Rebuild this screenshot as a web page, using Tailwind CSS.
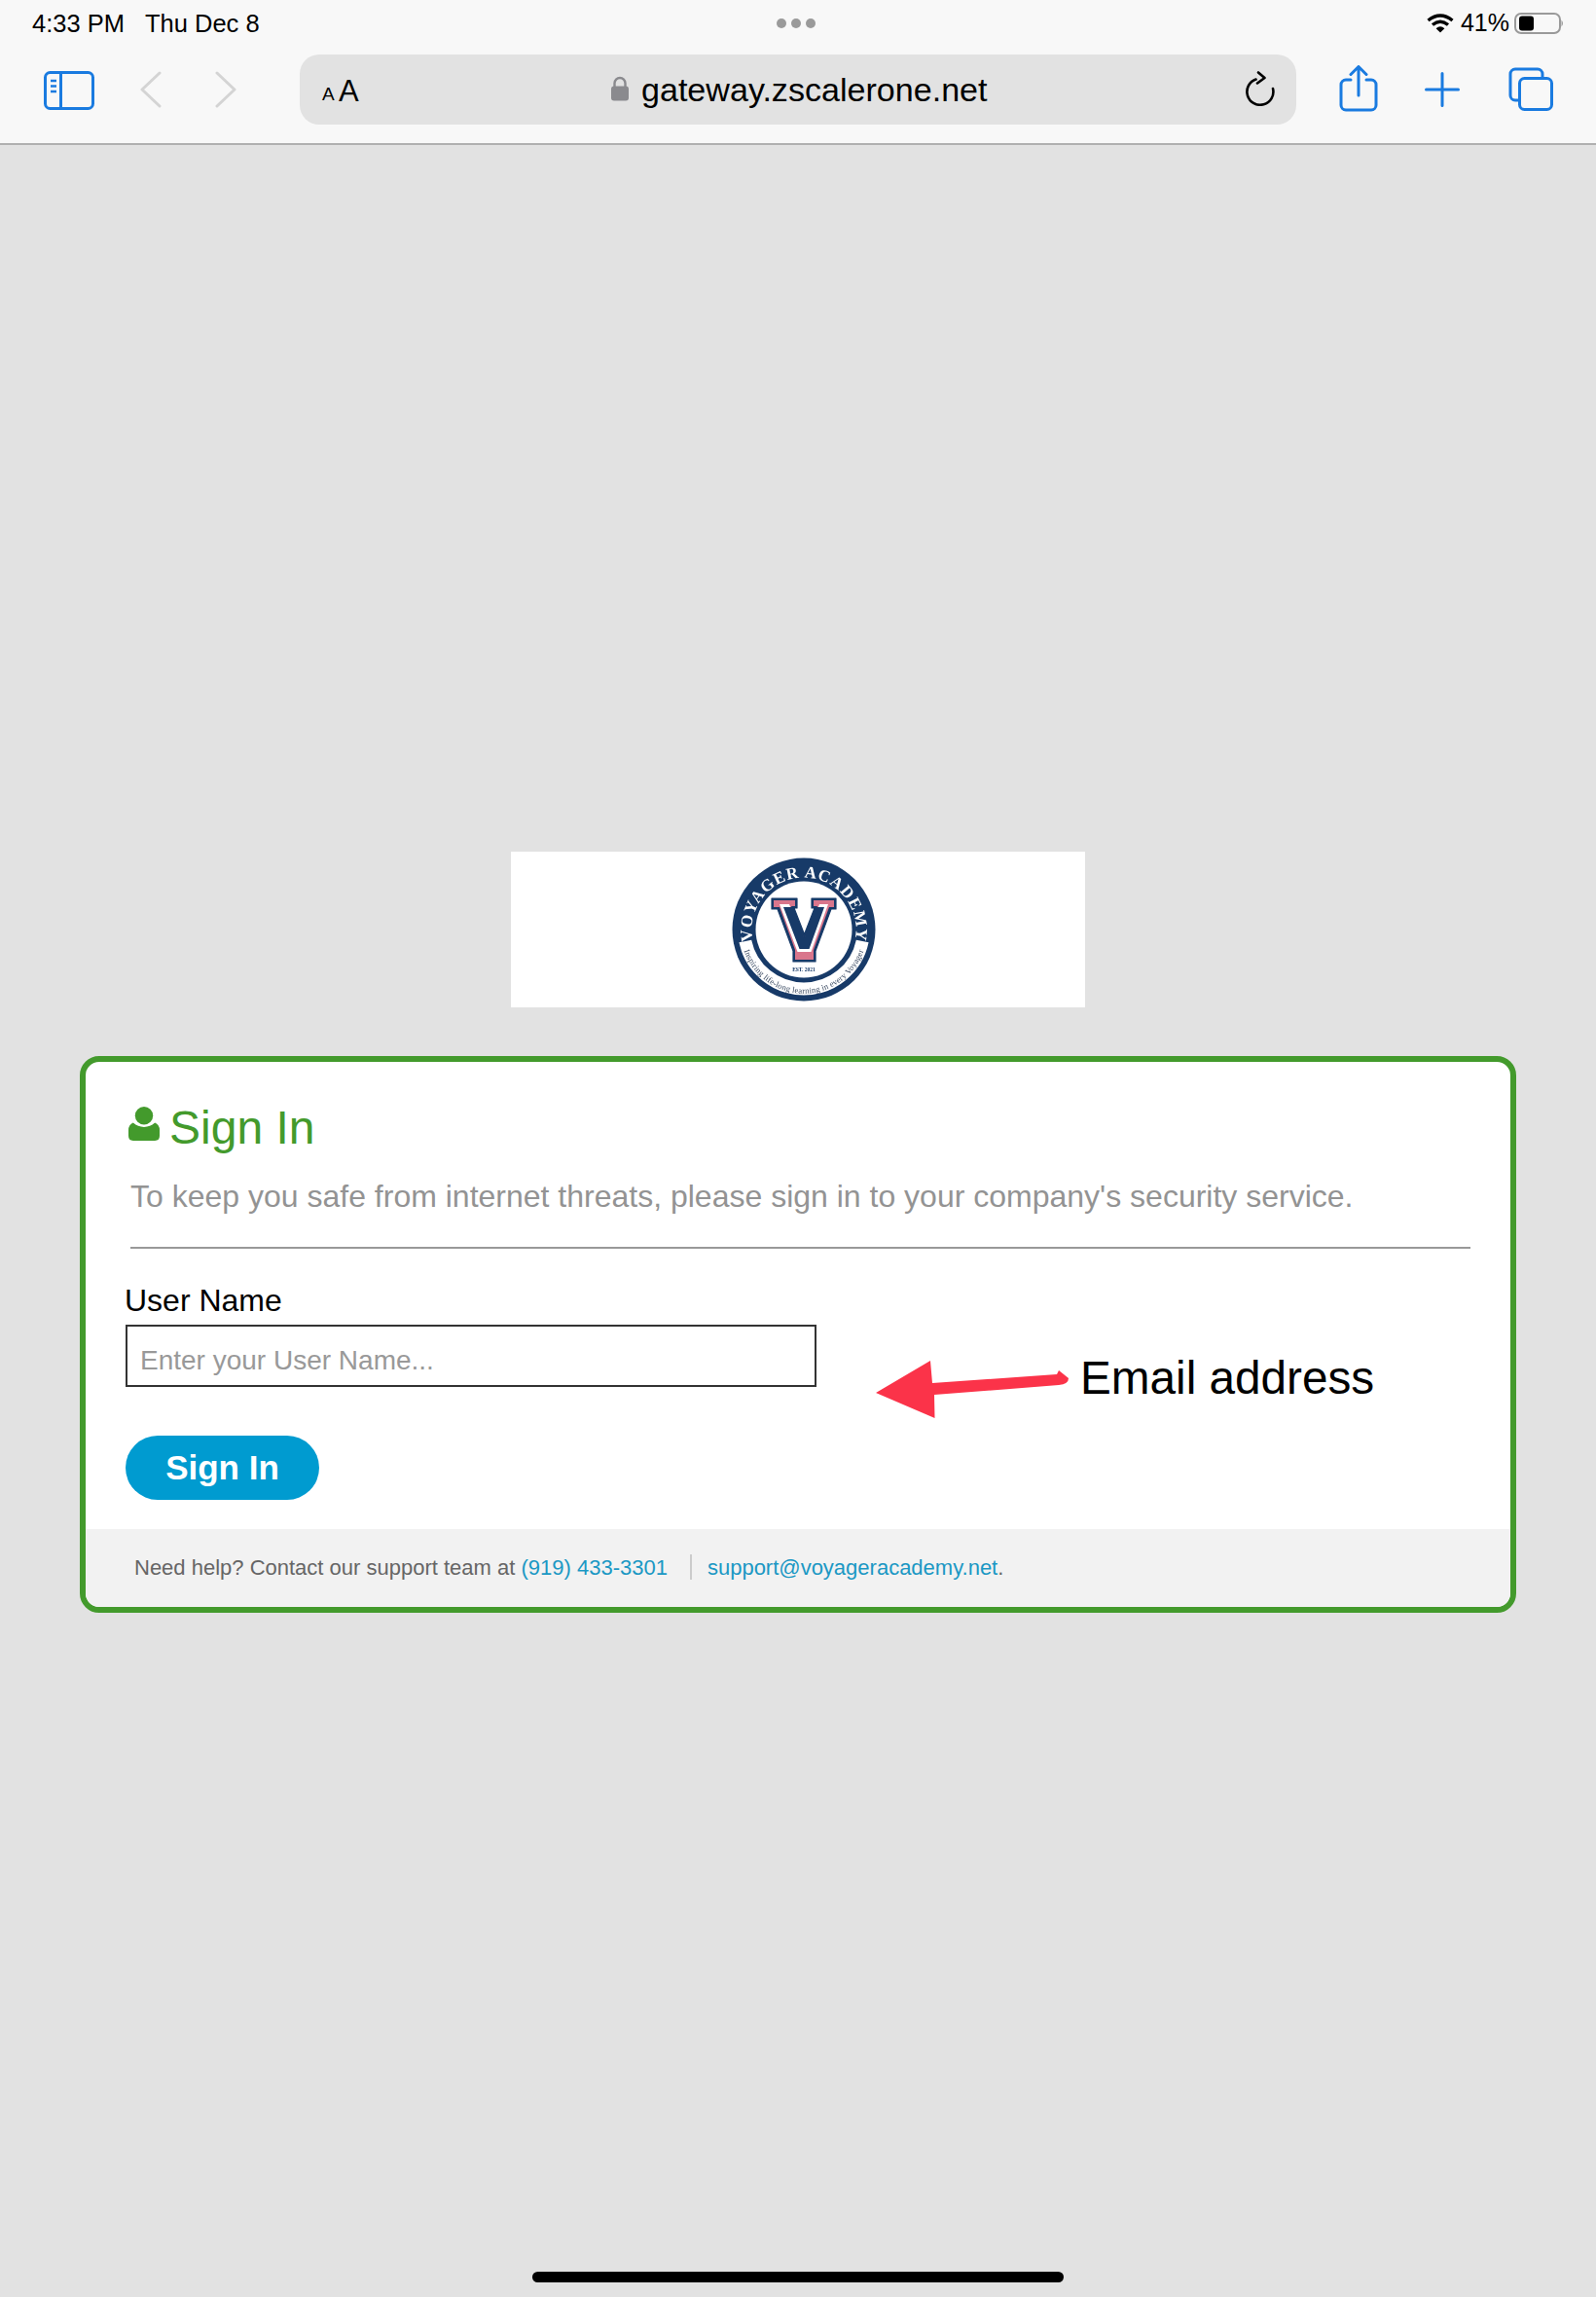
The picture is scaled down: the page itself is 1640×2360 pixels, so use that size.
<!doctype html>
<html>
<head>
<meta charset="utf-8">
<script src="https://cdn.jsdelivr.net/npm/@tailwindcss/browser@4"></script>
</head>
<body class="m-0 bg-[#e2e2e2] font-['Liberation_Sans',Arial,sans-serif]">
<div class="relative w-[1640px] h-[2360px] overflow-hidden flex flex-col">
  <header class="h-[149px] shrink-0 bg-[#f8f8f8] border-b-2 border-[#b0b0b0] flex flex-col">
    <div class="relative h-[48px] flex items-center justify-between pl-[33px] pr-[32px] text-[25.500px] text-black">
      <div class="flex gap-[21px]"><span>4:33 PM</span><span>Thu Dec 8</span></div>
      <div class="absolute left-[798px] top-[19px] flex gap-[5px]">
        <span class="w-[10px] h-[10px] rounded-full bg-[#9a9a9a]"></span>
        <span class="w-[10px] h-[10px] rounded-full bg-[#9a9a9a]"></span>
        <span class="w-[10px] h-[10px] rounded-full bg-[#9a9a9a]"></span>
      </div>
      <div class="flex items-center">
        <svg class="w-[28px] h-[20px] mr-[7px]" viewBox="0 0 28 20" fill="none" stroke="#000" stroke-width="3.4">
          <path d="M1.5 7 Q14 -3 26.5 7"/><path d="M6 11.5 Q14 5 22 11.5"/><path d="M14 19.5 L9.6 15.2 Q14 11.5 18.4 15.2 Z" fill="#000" stroke="none"/>
        </svg>
        <span class="text-[25px]">41%</span>
        <svg class="w-[52px] h-[22px] ml-[5px]" viewBox="0 0 52 22" fill="none">
          <rect x="1" y="1" width="46" height="20" rx="6" stroke="#9a9a9a" stroke-width="2"/>
          <rect x="5" y="3.5" width="15" height="15" rx="3" fill="#000"/>
          <path d="M48.500 7.500 Q51.500 11 48.500 14.500 Z" fill="#9a9a9a"/>
        </svg>
      </div>
    </div>
    <div class="h-[72px] mt-[8px] flex items-center relative">
      <svg class="absolute left-[45px] top-[17px] w-[52px] h-[40px]" viewBox="0 0 52 40" fill="none" stroke="#1a7be0" stroke-width="3">
        <rect x="1.5" y="1.5" width="49" height="37" rx="5"/><path d="M17.5 1.5 V38.5"/>
        <path d="M7 10 H13 M7 15.5 H13 M7 21 H13" stroke-width="2.4"/>
      </svg>
      <svg class="absolute left-[143px] top-[17px] w-[24px] h-[38px]" viewBox="0 0 24 38" fill="none" stroke="#d4d4d4" stroke-width="3" stroke-linecap="round" stroke-linejoin="round"><path d="M21 2 L3 19 L21 36"/></svg>
      <svg class="absolute left-[220px] top-[17px] w-[24px] h-[38px]" viewBox="0 0 24 38" fill="none" stroke="#d4d4d4" stroke-width="3" stroke-linecap="round" stroke-linejoin="round"><path d="M3 2 L21 19 L3 36"/></svg>

      <div class="absolute left-[308px] top-0 w-[1024px] h-[72px] rounded-[20px] bg-[#e2e2e2]">
        <span class="absolute left-[23px] top-[31px] text-[19px] leading-[20px] text-black">A</span>
        <span class="absolute left-[40px] top-[22px] text-[31px] leading-[32px] text-black">A</span>
        <svg class="absolute left-[319px] top-[22px] w-[20px] h-[26px]" viewBox="0 0 20 26" fill="none">
          <path d="M4.5 11 V7.5 A5.5 5.5 0 0 1 15.5 7.5 V11" stroke="#8a8a8e" stroke-width="2.4"/>
          <rect x="1" y="10.5" width="18" height="15" rx="3" fill="#8a8a8e"/>
        </svg>
        <span class="absolute left-[351px] top-[16px] text-[34.100px] leading-[40px] text-black">gateway.zscalerone.net</span>
        <svg class="absolute left-[971px] top-[17px] w-[32px] h-[36px]" viewBox="0 0 32 36" fill="none" stroke="#000" stroke-width="2.6" stroke-linecap="round" stroke-linejoin="round">
          <path d="M11.5 8.5 A13.5 13.5 0 1 0 29 18"/><path d="M14 1.5 L20.5 7 L13 12.5"/>
        </svg>
      </div>

      <svg class="absolute left-[1376px] top-[11px] w-[40px] h-[48px]" viewBox="0 0 40 48" fill="none" stroke="#1a7be0" stroke-width="3" stroke-linecap="round" stroke-linejoin="round">
        <path d="M12 15 H7 A5 5 0 0 0 2 20 V41 A5 5 0 0 0 7 46 H33 A5 5 0 0 0 38 41 V20 A5 5 0 0 0 33 15 H28"/>
        <path d="M20 31 V2 M12 9.5 L20 1.5 L28 9.5"/>
      </svg>
      <svg class="absolute left-[1464px] top-[18px] w-[36px] h-[36px]" viewBox="0 0 36 36" fill="none" stroke="#1a7be0" stroke-width="3" stroke-linecap="round"><path d="M18 1.5 V34.5 M1.5 18 H34.5"/></svg>
      <svg class="absolute left-[1550px] top-[13px] w-[46px] h-[45px]" viewBox="0 0 46 45" fill="none" stroke="#1a7be0" stroke-width="3" stroke-linejoin="round">
        <path d="M35 10.5 V7 A5 5 0 0 0 30 2 H7 A5 5 0 0 0 2 7 V29 A5 5 0 0 0 7 34 H11"/>
        <rect x="11.5" y="11.5" width="33" height="32" rx="5"/>
      </svg>
    </div>
  </header>

  <main class="flex-1 flex flex-col items-start">
    <div class="ml-[525px] mt-[726px] w-[590px] h-[160px] bg-white flex items-center justify-center">
      <svg class="ml-[11px] w-[150px] h-[150px] blur-[0.6px]" viewBox="0 0 150 150" font-family="'Liberation Serif',serif">
        <defs>
          <path id="top" d="M22.3 84.3 A53.500 53.500 0 1 1 127.700 84.300"/>
          <path id="bot" d="M11 87 A65 65 0 0 0 139 87"/>
        </defs>
        <circle cx="75" cy="75" r="73.500" fill="#173a68"/>
        <path d="M14.800 87 A61.500 61.500 0 0 0 135.200 87" fill="none" stroke="#fff" stroke-width="13"/>
        <circle cx="75" cy="75" r="49.500" fill="#fff"/>
        <text font-size="17" font-weight="700" fill="#fff" letter-spacing="0.900"><textPath href="#top" startOffset="50%" text-anchor="middle">VOYAGER ACADEMY</textPath></text>
        <text font-size="8.500" fill="#3a4a62" letter-spacing="0.200"><textPath href="#bot" startOffset="50%" text-anchor="middle">Inspiring life-long learning in every Voyager</textPath></text>
        <path d="M42 43 H68 V53 H65 L75.500 80 L86 53 H83 V43 H108 V54 H103 L87 97 V108 H64 V97 L48 54 H42 Z" fill="#173a68" stroke="#173a68" stroke-width="1.200" stroke-linejoin="round"/>
        <path d="M44 45 H66 V51 H62 L75.500 85 L89 51 H85 V45 H106 V52 H101 L85 96 V106 H66 V96 L50 52 H44 Z" fill="#d9768c"/>
        <path d="M50 49 H60 L75.500 90 L91 49 H100 L82.500 98 H68.500 Z" fill="#fff"/>
        <path d="M54 52 H64 L75.500 84 L87 52 H96 L80.500 95 H70.500 Z" fill="#173a68"/>
        <text x="75" y="118" text-anchor="middle" font-size="5.500" fill="#173a68" font-weight="700">EST. 2021</text>
      </svg>
    </div>

    <section class="relative ml-[82px] mt-[50px] w-[1476px] h-[572px] rounded-[20px] border-[6px] border-[#439a2c] bg-white overflow-hidden flex flex-col">
      <div class="flex-1 pl-[46px] pr-[41px] relative">
        <div class="h-[90px] flex items-start pt-[41px]">
          <svg class="w-[32px] h-[35px] mt-[5px] -ml-[2px]" viewBox="0 0 33 36" fill="#439a2c">
            <circle cx="16.500" cy="9.500" r="9.500"/>
            <path d="M5 17 Q10 21.500 16.500 21.500 Q23 21.500 28 17 Q33 19 33 25 V31 Q33 36 28 36 H5 Q0 36 0 31 V25 Q0 19 5 17 Z"/>
          </svg>
          <h1 class="ml-[10px] mt-[0px] text-[48px] leading-[54px] text-[#439a2c] font-normal">Sign In</h1>
        </div>
        <p class="mt-[28px] text-[32px] leading-[40px] text-[#939393] whitespace-nowrap">To keep you safe from internet threats, please sign in to your company's security service.</p>
        <div class="mt-[32px] h-[2px] bg-[#999]"></div>
        <label class="block -ml-[6px] mt-[35px] text-[32px] leading-[36px] text-black">User Name</label>
        <input class="block -ml-[5px] mt-[7px] w-[710px] h-[64px] border-2 border-[#333] bg-white pl-[13px] pr-[14px] pt-[9px] text-[28px] placeholder:text-[#999] outline-none" placeholder="Enter your User Name...">
        <button class="block -ml-[5px] mt-[50px] w-[199px] h-[66px] rounded-full bg-[#009bd0] text-white font-bold text-[35px] leading-[40px]">Sign In</button>
      </div>
      <footer class="h-[80px] bg-[#f2f2f2] pl-[50px] pb-[2px] flex items-center text-[22px] text-[#666] whitespace-nowrap">
        <span>Need help? Contact our support team at <span class="text-[#1b98c4]">(919) 433-3301</span></span>
        <span class="ml-[23px] w-[2px] h-[26px] bg-[#ccc]"></span>
        <span class="ml-[16px]"><span class="text-[#1b98c4]">support@voyageracademy.net</span>.</span>
      </footer>

      <svg class="absolute left-[812px] top-[305px] w-[200px] h-[64px]" viewBox="0 0 200 64" fill="#fb3349">
        <path d="M0 35 L56 2 L58 25 L186 16 L188 12 L198 20 Q198 26 188 27 L60 37 L60.500 61 Z"/>
      </svg>
      <span class="absolute left-[1022px] top-[297px] text-[47.700px] leading-[56px] text-black whitespace-nowrap">Email address</span>
    </section>
  </main>

  <div class="absolute left-[547px] top-[2334px] w-[546px] h-[11px] rounded-full bg-black"></div>
</div>
</body>
</html>
